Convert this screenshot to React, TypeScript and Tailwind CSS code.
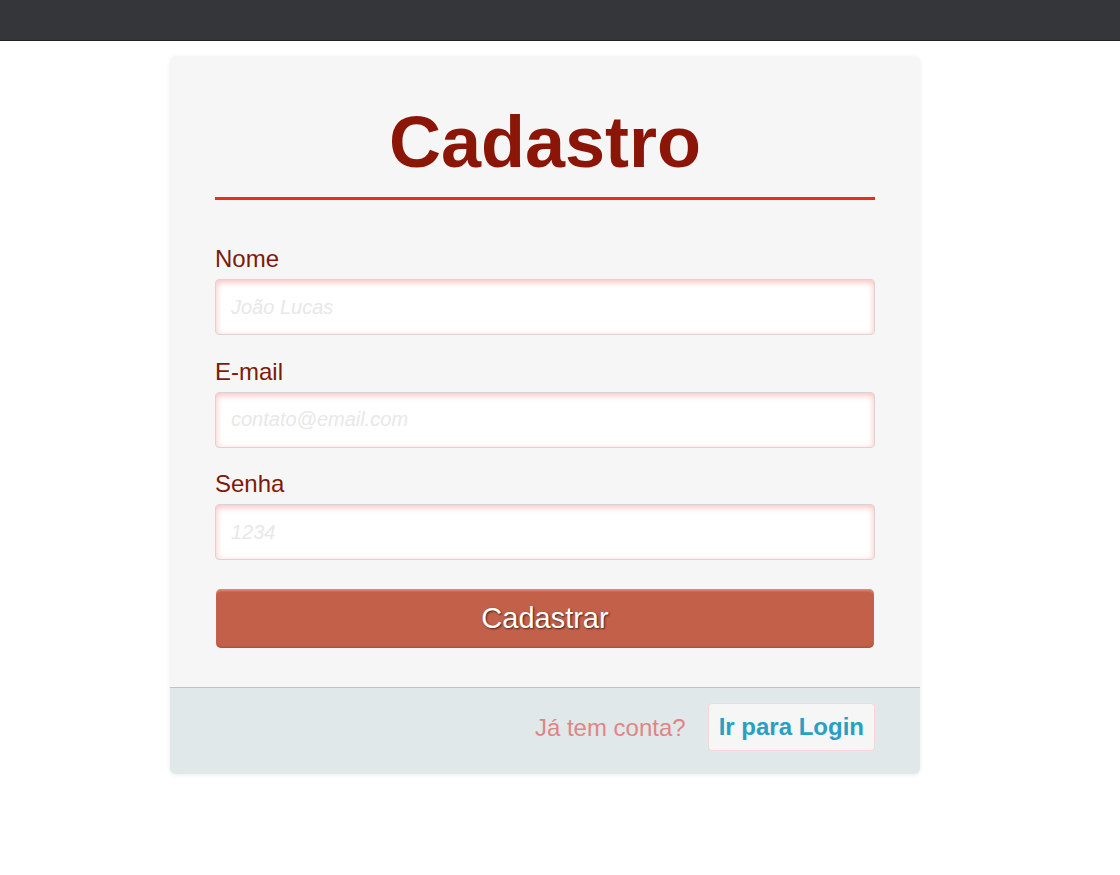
import React from "react";

export default function App() {
  return (
    <div className="min-h-[875px] bg-white" style={{ fontFamily: '"Liberation Sans", Arial, sans-serif' }}>
      <div className="h-[41px] bg-[#35363a] border-b border-[#202124]" />
      <div className="flex pl-[170px] pt-[15px]">
        <div className="w-[750px] rounded-[6px] bg-[#f6f6f6] shadow-[0_1px_4px_rgba(0,0,0,0.08)] overflow-hidden">
          <div className="px-[45px] pt-[45px] pb-[39px]">
            <h1 className="text-center text-[72px] leading-[83px] font-bold text-[#8b1506] pb-[13px] border-b-[3px] border-[#e2301a]">
              Cadastro
            </h1>
            <div className="mt-[45px] flex flex-col gap-[22.5px]">
              {[
                { label: "Nome", ph: "João Lucas", type: "text" },
                { label: "E-mail", ph: "contato@email.com", type: "email" },
                { label: "Senha", ph: "1234", type: "password" },
              ].map((f) => (
                <div key={f.label} className="flex flex-col gap-[6px]">
                  <label className="text-[24px] leading-[28px] text-[#7d1a0a]">{f.label}</label>
                  <input
                    type={f.type}
                    placeholder={f.ph}
                    className="h-[56px] w-full rounded-[4px] border border-[#dcd4d4] bg-white px-[15px] text-[20px] italic shadow-[inset_0_2px_6px_rgba(255,120,120,0.5)] outline-none placeholder:text-[#e8e8e8] placeholder:italic"
                  />
                </div>
              ))}
            </div>
            <div className="mt-[29px] px-px">
              <button className="h-[59px] w-full rounded-[5px] bg-[#c2604a] text-[29px] text-white shadow-[inset_0_2px_2px_rgba(255,170,150,0.55),inset_0_-1px_2px_rgba(120,40,30,0.35)] [text-shadow:1px_1px_2px_rgba(0,0,0,0.65)]">
                Cadastrar
              </button>
            </div>
          </div>
          <div className="flex items-center justify-end gap-[22px] border-t border-[#cdbfbf] bg-[#e0e8ea] px-[45px] pt-[15px] pb-[23px]">
            <span className="text-[24px] text-[#e08585] translate-y-px">Já tem conta?</span>
            <button className="h-[48px] rounded-[4px] border border-[#f6d6d6] bg-[#f6f6f6] px-[10px] text-[24px] font-bold text-[#27a0c4]">
              Ir para Login
            </button>
          </div>
        </div>
      </div>
    </div>
  );
}
